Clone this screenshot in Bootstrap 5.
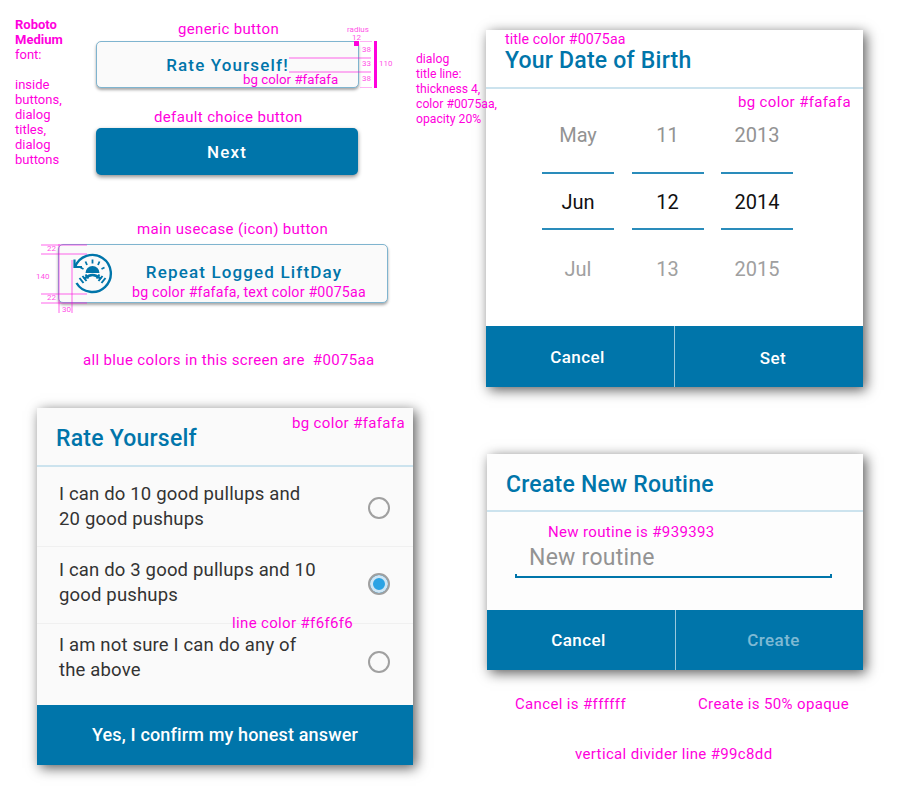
<!DOCTYPE html>
<html lang="en">

<head>
    <meta charset="UTF-8">
    <title>Button and dialog spec</title>
    <meta name="viewport" content="width=device-width, initial-scale=1">
    <link href="https://cdn.jsdelivr.net/npm/bootstrap@5.3.0/dist/css/bootstrap.min.css" rel="stylesheet">
    <style>
        body { background: #fff; font-family: Roboto, sans-serif; margin: 0; }
        .sheet { position: relative; width: 900px; height: 800px; overflow: hidden; }

        /* annotations sit on a free canvas */
        .note { position: absolute; z-index: 3; color: #f0d; font-size: 15px; line-height: 15px; white-space: nowrap; letter-spacing: .35px; }
        .note-side { font-size: 13px; letter-spacing: 0; white-space: normal; }
        .note-small { font-size: 12.200px; }
        .note-tiny { font-size: 8px; line-height: 8px; opacity: .7; letter-spacing: 0; }
        .guide { position: absolute; background: #f0d; opacity: .3; }
        .guide-solid { position: absolute; background: #f0d; }

        .spec-btn { position: absolute; display: flex; align-items: center; justify-content: center; font-weight: 500; letter-spacing: 1.15px; border-radius: 5px; padding: 0; }
        .spec-btn-light, .spec-btn-light:hover { background: #fafafa; color: #0075aa; border: 1px solid #7fb4cf; box-shadow: 0 2px 3px rgba(0, 0, 0, .35); }
        .spec-btn-blue, .spec-btn-blue:hover { background: #0075aa; color: #fff; border: 0; box-shadow: 0 2px 4px rgba(0, 0, 0, .45); }
        .btn-rate { left: 96px; top: 41px; width: 263px; height: 47px; font-size: 17px; padding-top: 3px; }
        .btn-next { left: 96px; top: 128px; width: 262px; height: 47px; font-size: 17px; padding-top: 2px; }
        .btn-repeat { left: 58px; top: 244px; width: 330px; height: 59px; font-size: 17px; padding: 0 0 1px 42px; }
        .repeat-icon { position: absolute; left: 13px; top: 8px; width: 42px; height: 42px; }

        .dialog { position: absolute; background: #fafafa; box-shadow: 3px 3px 12px rgba(0, 0, 0, .65); display: flex; flex-direction: column; }
        .dialog-birth { left: 486px; top: 30px; width: 377px; height: 357px; background: #fff; }
        .dialog-rate { left: 37px; top: 408px; width: 376px; height: 357px; }
        .dialog-routine { left: 487px; top: 454px; width: 376px; height: 216px; background: #fdfdfd; }
        .dialog-head { flex: none; border-bottom: 2px solid #cce3ee; color: #0075aa; font-weight: 500; font-size: 23px; line-height: 28px; padding: 17px 0 0 19px; letter-spacing: .22px; height: 59px; }
        .dialog-routine .dialog-head { height: 58px; }
        .dialog-body { flex: 1 1 auto; min-height: 0; }
        .dialog-foot { flex: none; height: 60px; background: #0075aa; color: #fff; font-weight: 500; font-size: 17px; letter-spacing: .45px; display: flex; }
        .dialog-birth .dialog-foot { height: 61px; }
        .dialog-rate .dialog-foot { font-size: 18px; letter-spacing: .15px; }
        .foot-part { flex: 1 1 0; display: flex; align-items: center; justify-content: center; }
        .foot-first { flex: 0 0 188px; padding: 2px 5px 0 0; }
        .foot-set { border-left: 1px solid #99c8dd; padding: 5px 0 0 8px; }
        .foot-dim { color: rgba(255, 255, 255, .5); padding-top: 1px; }
        .foot-only { padding-bottom: 2px; }

        .wheels { display: flex; gap: 17.5px; padding: 29px 0 0 56px; }
        .wheel { width: 72px; text-align: center; font-size: 20px; color: #939393; }
        .wheel-cell { display: flex; align-items: center; justify-content: center; }
        .wheel-cell-first { height: 55px; padding-bottom: 22px; margin-bottom: -1px; }
        .wheel-cell-now { height: 58px; padding-top: 1px; color: #111; border-top: 2px solid #2a8cbb; border-bottom: 2px solid #2a8cbb; }
        .wheel-cell-last { height: 68px; margin-top: -3px; padding-top: 16px; color: #a0a0a0; }

        .pick-row { display: flex; align-items: center; justify-content: space-between; padding: 0 23px 0 22px; font-size: 18.5px; line-height: 25px; letter-spacing: .17px; color: #333; height: 79px; }
        .pick-row + .pick-row { border-top: 1px solid #f0f0f0; height: 77px; }
        .pick-row:last-child { height: 81px; }
        .pick-row:last-child .pick-copy { margin-bottom: 13px; }
        .pick-row:last-child .pick-round { margin-bottom: 4px; }
        .pick-row:nth-child(2) .pick-copy { margin-bottom: 5px; }
        .pick-row:nth-child(2) .pick-round { margin-bottom: 2px; }
        .pick-row:first-child .pick-round { margin-top: 2px; }
        .pick-round { flex: none; width: 22px; height: 22px; border: 2px solid #a0a0a0; border-radius: 50%; background: #fafafa; }
        .pick-round-on { background: #2ba3e4; box-shadow: inset 0 0 0 3px #cfe6f5; }

        .routine-input { margin: 30px 31px 0 28px; height: 36px; padding: 2px 0 0 14px; border-bottom: 2px solid #0075aa; color: #939393; font-size: 23px; line-height: 28px; position: relative; letter-spacing: .25px; }
        .routine-input::before, .routine-input::after { content: ""; position: absolute; bottom: -2px; width: 2px; height: 4px; background: #0075aa; }
        .routine-input::before { left: 0; }
        .routine-input::after { right: 0; }
    </style>
</head>

<body>
    <div class="sheet">
        <div class="note note-side" style="left:15px;top:17px;width:60px"><b class="fw-bold">Roboto Medium</b><br>font:<br><br>inside buttons, dialog titles, dialog buttons</div>
        <div class="note" style="left:178px;top:22px">generic button</div>
        <div class="note" style="left:154px;top:110px">default choice button</div>
        <div class="note" style="left:137px;top:222px">main usecase (icon) button</div>
        <div class="note" style="left:83px;top:353px">all blue colors in this screen are&nbsp; #0075aa</div>
        <div class="note note-side note-small" style="left:416px;top:52px;width:85px">dialog<br>title line:<br>thickness 4,<br>color #0075aa,<br>opacity 20%</div>

        <button type="button" class="btn spec-btn spec-btn-light btn-rate">Rate Yourself!</button>
        <button type="button" class="btn spec-btn spec-btn-blue btn-next">Next</button>
        <button type="button" class="btn spec-btn spec-btn-light btn-repeat">
            <svg class="repeat-icon" viewBox="0 0 42 42" fill="none" stroke="#0075aa">
                <path d="M3 14A18.500 18.500 0 1 1 4.500 30" stroke-width="2.400" />
                <path d="M2.500 6.500v7.500h7.500" stroke-width="2.200" />
                <path d="M13.500 20a7 7 0 0 1 14 0z" fill="#0075aa" stroke="none" />
                <path d="M20.500 6.500v4M13.500 8.500l1.500 3.500M27.500 8.500l-1.500 3.500M8.500 14.500l3 1.500M32.500 14.500l-3 1.500" stroke-width="1.800" />
                <path d="M12 26q8.500-8 17 0" stroke-width="2.200" />
                <path d="M7.500 25l4 5M10.500 23l4 5M13.500 21.500l3 4M33.500 25l-4 5M30.500 23l-4 5M27.500 21.500l-3 4" stroke-width="2" />
            </svg>
            Repeat Logged LiftDay
        </button>

        <div class="note" style="left:243px;top:72px;font-size:13.300px;letter-spacing:0">bg color #fafafa</div>
        <div class="guide" style="left:289px;top:57px;width:82px;height:2px"></div>
        <div class="guide" style="left:289px;top:71px;width:82px;height:2px"></div>
        <div class="guide" style="left:360px;top:41px;width:12px;height:1px"></div>
        <div class="guide" style="left:360px;top:87px;width:12px;height:1px"></div>
        <div class="guide-solid" style="left:354px;top:41px;width:5px;height:5px"></div>
        <div class="guide-solid" style="left:374px;top:41px;width:3px;height:47px"></div>
        <div class="note note-tiny" style="left:347px;top:26px">radius</div>
        <div class="note note-tiny" style="left:352px;top:34px">12</div>
        <div class="note note-tiny" style="left:362px;top:46px">38</div>
        <div class="note note-tiny" style="left:362px;top:60px">33</div>
        <div class="note note-tiny" style="left:362px;top:75px">38</div>
        <div class="note note-tiny" style="left:379px;top:60px">110</div>

        <div class="note" style="left:132px;top:285px;font-size:14.200px;letter-spacing:.2px">bg color #fafafa, text color #0075aa</div>
        <div class="guide" style="left:41px;top:244px;width:46px;height:2px"></div>
        <div class="guide" style="left:41px;top:253px;width:46px;height:2px"></div>
        <div class="guide" style="left:41px;top:293px;width:46px;height:2px"></div>
        <div class="guide" style="left:41px;top:302px;width:46px;height:2px"></div>
        <div class="guide" style="left:58px;top:244px;width:2px;height:69px"></div>
        <div class="guide" style="left:71px;top:260px;width:2px;height:53px"></div>
        <div class="note note-tiny" style="left:47px;top:245px">22</div>
        <div class="note note-tiny" style="left:36px;top:273px">140</div>
        <div class="note note-tiny" style="left:47px;top:294px">22</div>
        <div class="note note-tiny" style="left:62px;top:306px">30</div>

        <section class="dialog dialog-birth">
            <div class="dialog-head">Your Date of Birth</div>
            <div class="dialog-body wheels">
                <div class="wheel">
                    <div class="wheel-cell wheel-cell-first">May</div>
                    <div class="wheel-cell wheel-cell-now">Jun</div>
                    <div class="wheel-cell wheel-cell-last">Jul</div>
                </div>
                <div class="wheel">
                    <div class="wheel-cell wheel-cell-first">11</div>
                    <div class="wheel-cell wheel-cell-now">12</div>
                    <div class="wheel-cell wheel-cell-last">13</div>
                </div>
                <div class="wheel">
                    <div class="wheel-cell wheel-cell-first">2013</div>
                    <div class="wheel-cell wheel-cell-now">2014</div>
                    <div class="wheel-cell wheel-cell-last">2015</div>
                </div>
            </div>
            <div class="dialog-foot">
                <div class="foot-part foot-first">Cancel</div>
                <div class="foot-part foot-set">Set</div>
            </div>
        </section>
        <div class="note" style="left:505px;top:32px;font-size:14.200px;letter-spacing:.1px">title color #0075aa</div>
        <div class="note" style="left:738px;top:95px">bg color #fafafa</div>

        <section class="dialog dialog-rate">
            <div class="dialog-head">Rate Yourself</div>
            <div class="dialog-body">
                <div class="pick-row"><span class="pick-copy">I can do 10 good pullups and<br>20 good pushups</span><span class="pick-round"></span></div>
                <div class="pick-row"><span class="pick-copy">I can do 3 good pullups and 10<br>good pushups</span><span class="pick-round pick-round-on"></span></div>
                <div class="pick-row"><span class="pick-copy">I am not sure I can do any of<br>the above</span><span class="pick-round"></span></div>
            </div>
            <div class="dialog-foot">
                <div class="foot-part foot-only">Yes, I confirm my honest answer</div>
            </div>
        </section>
        <div class="note" style="left:292px;top:416px">bg color #fafafa</div>
        <div class="note" style="left:232px;top:616px">line color #f6f6f6</div>

        <section class="dialog dialog-routine">
            <div class="dialog-head">Create New Routine</div>
            <div class="dialog-body">
                <div class="routine-input">New routine</div>
            </div>
            <div class="dialog-foot">
                <div class="foot-part foot-first">Cancel</div>
                <div class="foot-part foot-set foot-dim">Create</div>
            </div>
        </section>
        <div class="note" style="left:548px;top:525px">New routine is #939393</div>
        <div class="note" style="left:515px;top:697px">Cancel is #ffffff</div>
        <div class="note" style="left:698px;top:697px">Create is 50% opaque</div>
        <div class="note" style="left:575px;top:747px">vertical divider line #99c8dd</div>
    </div>
    <script src="https://cdn.jsdelivr.net/npm/bootstrap@5.3.0/dist/js/bootstrap.bundle.min.js"></script>
</body>

</html>
